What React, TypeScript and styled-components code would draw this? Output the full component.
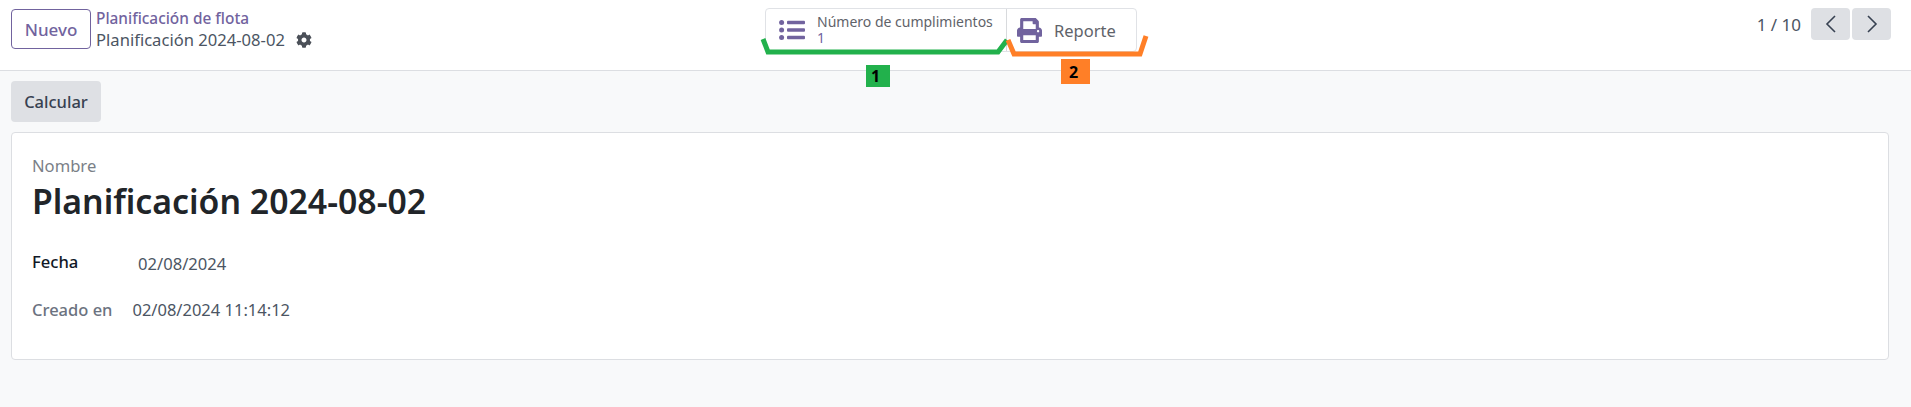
import React from 'react'
import styled, { createGlobalStyle } from 'styled-components'
import { FaCog, FaPrint } from 'react-icons/fa'

const GlobalStyle = createGlobalStyle`
  html, body {
    margin: 0;
    height: 100%;
    background: #f8f9fa;
    font-family: "Noto Sans", "Liberation Sans", sans-serif;
    font-size: 16.5px;
    color: #374151;
  }
`

export default function App() {
  return (
    <Page>
      <GlobalStyle />
      <ControlPanel>
        <LeftGroup>
          <NewButton>Nuevo</NewButton>
          <Breadcrumb>
            <ParentLink>Planificación de flota</ParentLink>
            <CurrentRecord>
              Planificación 2024-08-02
              <FaCog size={16} color="#4b5058" />
            </CurrentRecord>
          </Breadcrumb>
        </LeftGroup>
        <StatButtons>
          <StatButton>
            <ListIcon viewBox="0 0 26 22" fill="#71639e">
              <circle cx="2.6" cy="3.5" r="2.5" />
              <circle cx="2.6" cy="11" r="2.5" />
              <circle cx="2.6" cy="18.5" r="2.5" />
              <rect x="8" y="1.7" width="18" height="3.6" rx="1" />
              <rect x="8" y="9.2" width="18" height="3.6" rx="1" />
              <rect x="8" y="16.7" width="18" height="3.6" rx="1" />
            </ListIcon>
            <StatText>
              <span>Número de cumplimientos</span>
              <StatValue>1</StatValue>
            </StatText>
          </StatButton>
          <ReportButton>
            <PrintIcon />
            <span>Reporte</span>
          </ReportButton>
        </StatButtons>
        <Pager>
          <PagerText>1 / 10</PagerText>
          <PagerButtons>
            <PagerButton>
              <svg width="14" height="20" viewBox="0 0 14 20" fill="none" stroke="#374151" strokeWidth="1.6">
                <path d="M11 2 3 10l8 8" />
              </svg>
            </PagerButton>
            <PagerButton>
              <svg width="14" height="20" viewBox="0 0 14 20" fill="none" stroke="#374151" strokeWidth="1.6">
                <path d="m3 2 8 8-8 8" />
              </svg>
            </PagerButton>
          </PagerButtons>
        </Pager>
      </ControlPanel>
      <Content>
        <ActionButton>Calcular</ActionButton>
        <Sheet>
          <NameLabel>Nombre</NameLabel>
          <Title>Planificación 2024-08-02</Title>
          <DateRow>
            <StrongLabel>Fecha</StrongLabel>
            <span>02/08/2024</span>
          </DateRow>
          <CreatedRow>
            <MutedLabel>Creado en</MutedLabel>
            <span>02/08/2024 11:14:12</span>
          </CreatedRow>
        </Sheet>
      </Content>
      <Annotations width="1911" height="100" viewBox="0 0 1911 100" fill="none" strokeWidth="5">
        <path d="M763 39l5 13h230l9-12" stroke="#22b14c" />
        <path d="M1008 40l6 14h126l6-18" stroke="#ff7f27" />
      </Annotations>
      <GreenTag>1</GreenTag>
      <OrangeTag>2</OrangeTag>
    </Page>
  )
}

const Page = styled.div`
  position: relative;
  min-height: 407px;
`

const ControlPanel = styled.div`
  height: 71px;
  box-sizing: border-box;
  padding: 8px 20px 0 11px;
  display: grid;
  grid-template-columns: 754px auto 1fr;
  align-items: start;
  background: #fff;
  border-bottom: 1px solid #dcdee2;
`

const LeftGroup = styled.div`
  display: flex;
  gap: 5px;
  margin-top: 1px;
`

const NewButton = styled.button`
  width: 80px;
  height: 40px;
  padding: 0;
  background: #fff;
  border: 1px solid #71639e;
  border-radius: 4px;
  color: #71639e;
  font: 500 17px "Noto Sans", sans-serif;
`

const Breadcrumb = styled.div`
  display: flex;
  flex-direction: column;
`

const ParentLink = styled.a`
  color: #71639e;
  font-size: 15.4px;
  font-weight: 500;
  line-height: 20px;
`

const CurrentRecord = styled.div`
  display: flex;
  align-items: center;
  gap: 11px;
  font-size: 16.6px;
  line-height: 21px;
  color: #4b5563;
`

const StatButtons = styled.div`
  display: flex;
  height: 42px;
  background: #fff;
  border: 1px solid #e0e2e6;
  border-radius: 4px;
`

const StatButton = styled.div`
  width: 241px;
  display: flex;
  align-items: center;
  gap: 12px;
  padding-left: 13px;
  box-sizing: border-box;
  border-right: 1px solid #d8dadd;
`

const ListIcon = styled.svg`
  width: 26px;
  height: 22px;
`

const StatText = styled.div`
  display: flex;
  flex-direction: column;
  font-size: 14px;
  line-height: 16px;
  color: #5f636a;
`

const StatValue = styled.span`
  color: #71639e;
`

const ReportButton = styled.div`
  width: 129px;
  display: flex;
  align-items: center;
  gap: 12px;
  padding-left: 10px;
  box-sizing: border-box;
  font-size: 16.5px;
  color: #5f636a;
`

const PrintIcon = styled(FaPrint)`
  width: 25px;
  height: 25px;
  color: #71639e;
`

const Pager = styled.div`
  display: flex;
  justify-content: flex-end;
  align-items: center;
  gap: 10px;
`

const PagerText = styled.span`
  font-size: 17px;
  color: #4b5563;
`

const PagerButtons = styled.div`
  display: flex;
  gap: 2px;
`

const PagerButton = styled.button`
  width: 39px;
  height: 32px;
  padding: 0;
  display: flex;
  align-items: center;
  justify-content: center;
  background: #dee0e4;
  border: 0;
  border-radius: 4px;
`

const Content = styled.div`
  padding: 10px 22px 0 11px;
  display: flex;
  flex-direction: column;
  align-items: flex-start;
  gap: 10px;
`

const ActionButton = styled.button`
  width: 90px;
  height: 41px;
  padding: 0;
  background: #dee0e4;
  border: 0;
  border-radius: 4px;
  color: #374151;
  font: 500 16.5px "Noto Sans", sans-serif;
`

const Sheet = styled.div`
  align-self: stretch;
  height: 228px;
  box-sizing: border-box;
  padding: 22px 20px 0;
  background: #fff;
  border: 1px solid #dcdee2;
  border-radius: 4px;
`

const NameLabel = styled.div`
  font-size: 16.6px;
  line-height: 22px;
  color: #7a7f87;
`

const Title = styled.h1`
  margin: 1px 0 0;
  font-size: 33.8px;
  line-height: 46px;
  font-weight: 600;
  color: #212529;
`

const DateRow = styled.div`
  margin-top: 28px;
  display: flex;
  align-items: center;
  gap: 28px;
  font-size: 16.6px;
  line-height: 24px;
  color: #4b5563;
`

const StrongLabel = styled.span`
  width: 78px;
  margin-top: -5px;
  font-weight: 500;
  color: #111827;
`

const CreatedRow = styled.div`
  margin-top: 22px;
  display: flex;
  align-items: center;
  gap: 20px;
  font-size: 16.5px;
  line-height: 24px;
  color: #4b5563;
`

const MutedLabel = styled.span`
  font-weight: 500;
  color: #6b7280;
`

const Annotations = styled.svg`
  position: absolute;
  top: 0;
  left: 0;
  pointer-events: none;
`

const Tag = styled.div`
  position: absolute;
  display: flex;
  align-items: center;
  justify-content: center;
  color: #000;
  font: 700 16px "Noto Sans", sans-serif;
`

const GreenTag = styled(Tag)`
  left: 866px;
  top: 65px;
  width: 19px;
  padding-right: 5px;
  height: 22px;
  background: #22b14c;
`

const OrangeTag = styled(Tag)`
  left: 1061px;
  top: 59px;
  width: 25px;
  padding-right: 4px;
  height: 25px;
  background: #ff7f27;
`
